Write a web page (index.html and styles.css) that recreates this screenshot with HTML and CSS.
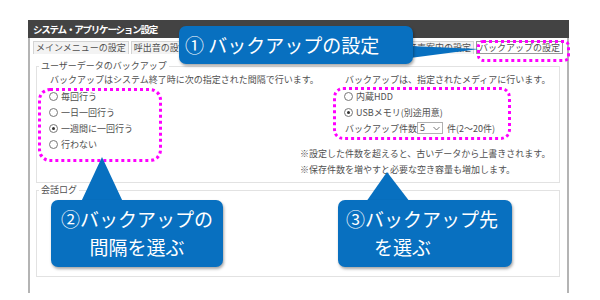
FILE: index.html
```html
<!DOCTYPE html>
<html lang="ja">
<head>
    <meta charset="UTF-8">
    <title>システム・アプリケーション設定</title>
    <link rel="stylesheet" href="styles.css">
</head>
<body>
    <div class="stage">
        <div class="window">
            <div class="titlebar">システム・アプリケーション設定</div>
            <div class="frame">
                <div class="tabs">
                    <span class="tab">メインメニューの設定</span>
                    <span class="tab">呼出音の設定</span>
                    <span class="tab push">音声案内の設定</span>
                    <span class="tab active">バックアップの設定</span>
                </div>

                <fieldset class="group">
                    <legend>ユーザーデータのバックアップ</legend>
                    <div class="cols">
                        <div class="col-left">
                            <p>バックアップはシステム終了時に次の指定された間隔で行います。</p>
                            <label class="radio"><i></i>毎回行う</label>
                            <label class="radio"><i></i>一日一回行う</label>
                            <label class="radio"><i class="on"></i>一週間に一回行う</label>
                            <label class="radio"><i></i>行わない</label>
                        </div>
                        <div class="col-right">
                            <div class="media">
                                <p>バックアップは、指定されたメディアに行います。</p>
                                <label class="radio"><i></i>内蔵HDD</label>
                                <label class="radio"><i class="on"></i>USBメモリ(別途用意)</label>
                                <div class="count">
                                    バックアップ件数
                                    <span class="select">5
                                        <svg width="7" height="5" viewBox="0 0 7 5"><path d="M0.5 1 L3.5 4 L6.5 1" fill="none" stroke="#777" stroke-width="1"/></svg>
                                    </span>
                                    件(2〜20件)
                                </div>
                            </div>
                            <div class="notes">
                                <p>※設定した件数を超えると、古いデータから上書きされます。</p>
                                <p>※保存件数を増やすと必要な空き容量も増加します。</p>
                            </div>
                        </div>
                    </div>
                </fieldset>

                <fieldset class="group">
                    <legend>会話ログ</legend>
                    <div class="log"></div>
                </fieldset>
            </div>
        </div>

        <div class="ring ring-tab"></div>
        <div class="ring ring-interval"></div>
        <div class="ring ring-media"></div>

        <svg class="tails" width="600" height="300" viewBox="0 0 600 300">
            <polygon points="410,46 479,49 410,58" fill="#0870c0"/>
            <polygon points="81,202 123,202 102,157" fill="#0870c0"/>
            <polygon points="366,202 410,202 387,172" fill="#0870c0"/>
        </svg>

        <div class="callout callout-tab">① バックアップの設定</div>
        <div class="callout callout-interval"><span class="line">②バックアップの</span><span class="line">間隔を選ぶ</span></div>
        <div class="callout callout-media"><span class="line">③バックアップ先</span><span class="line indent">を選ぶ</span></div>
    </div>
</body>
</html>
```

FILE: styles.css
```css
body { margin: 0; background: #fff; font-family: "Noto Sans CJK JP", sans-serif; color: #505050; }
.stage { position: relative; width: 600px; height: 300px; overflow: hidden; }

.window { margin: 20px 0 0 28px; width: 541px; }
.titlebar { height: 18px; line-height: 18px; background: #434343; color: #fff; font-size: 9.5px; font-weight: bold; letter-spacing: -1.2px; padding-left: 5px; }
.frame { height: 252px; border: solid #b4b4b4; border-width: 0 2px; padding: 3px 4px 0 3px; background: #fff; }

.tabs { display: flex; gap: 2px; height: 13px; }
.tab { font-size: 9px; line-height: 12px; padding: 0 2px; border: 1px solid #d4d4d4; border-bottom: none; background: #f3f3f3; white-space: nowrap; }
.tab.push { margin-left: auto; }
.tab.active { background: #fff; border-color: #999; border-bottom: 1px solid #999; }

.group { margin: 6px 3px 0 3px; padding: 0 0 4px; border: 1px solid #e2e2e2; min-width: 0; }
.group + .group { margin-top: 1px; }
.group legend { font-size: 9px; line-height: 12px; padding: 0 2px; margin-left: 2px; }
.log { height: 76px; }

.cols { display: flex; }
.col-left { width: 263px; box-sizing: border-box; padding-left: 13px; white-space: nowrap; }
.col-right { white-space: nowrap; }
.media { padding-left: 45px; }
.notes { margin-top: 10px; }

p { margin: 0; font-size: 9px; line-height: 16px; }
.radio { display: flex; align-items: center; height: 16px; font-size: 9px; }
.radio i { width: 7px; height: 7px; border: 1px solid #777; border-radius: 50%; margin: 0 3px 0 -1px; position: relative; background: #fff; }
.radio i.on::after { content: ""; position: absolute; left: 2px; top: 2px; width: 3px; height: 3px; border-radius: 50%; background: #333; }

.count { display: flex; align-items: center; height: 16px; font-size: 9px; }
.select { display: flex; align-items: center; justify-content: space-between; width: 26px; height: 12px; box-sizing: border-box; border: 1px solid #b0b0b0; margin: 0 4px 0 0; padding: 0 2px 0 2px; background: #fff; line-height: 10px; }

.ring { position: absolute; border: 3px dotted #f0f; box-sizing: border-box; }
.ring-tab { left: 477px; top: 40px; width: 93px; height: 22px; border-radius: 6px; }
.ring-interval { left: 38px; top: 88px; width: 124px; height: 74px; border-radius: 12px; }
.ring-media { left: 333px; top: 87px; width: 178px; height: 53px; border-radius: 10px; }

.tails { position: absolute; left: 0; top: 0; }

.callout { position: absolute; background: #0870c0; color: #fff; border-radius: 7px; box-shadow: 1px 2px 3px rgba(0, 0, 0, 0.35); box-sizing: border-box; white-space: nowrap; }
.callout-tab { left: 179px; top: 26px; width: 234px; height: 38px; font-size: 19px; line-height: 38px; padding-left: 6px; }
.callout-interval { left: 51px; top: 200px; width: 172px; height: 67px; font-size: 19px; padding-top: 5px; text-align: center; }
.callout-media { left: 338px; top: 200px; width: 174px; height: 67px; font-size: 19px; padding: 5px 0 0 8px; }
.callout .line { display: block; height: 28px; line-height: 28px; }
.callout-media .indent { padding-left: 28px; }
```
